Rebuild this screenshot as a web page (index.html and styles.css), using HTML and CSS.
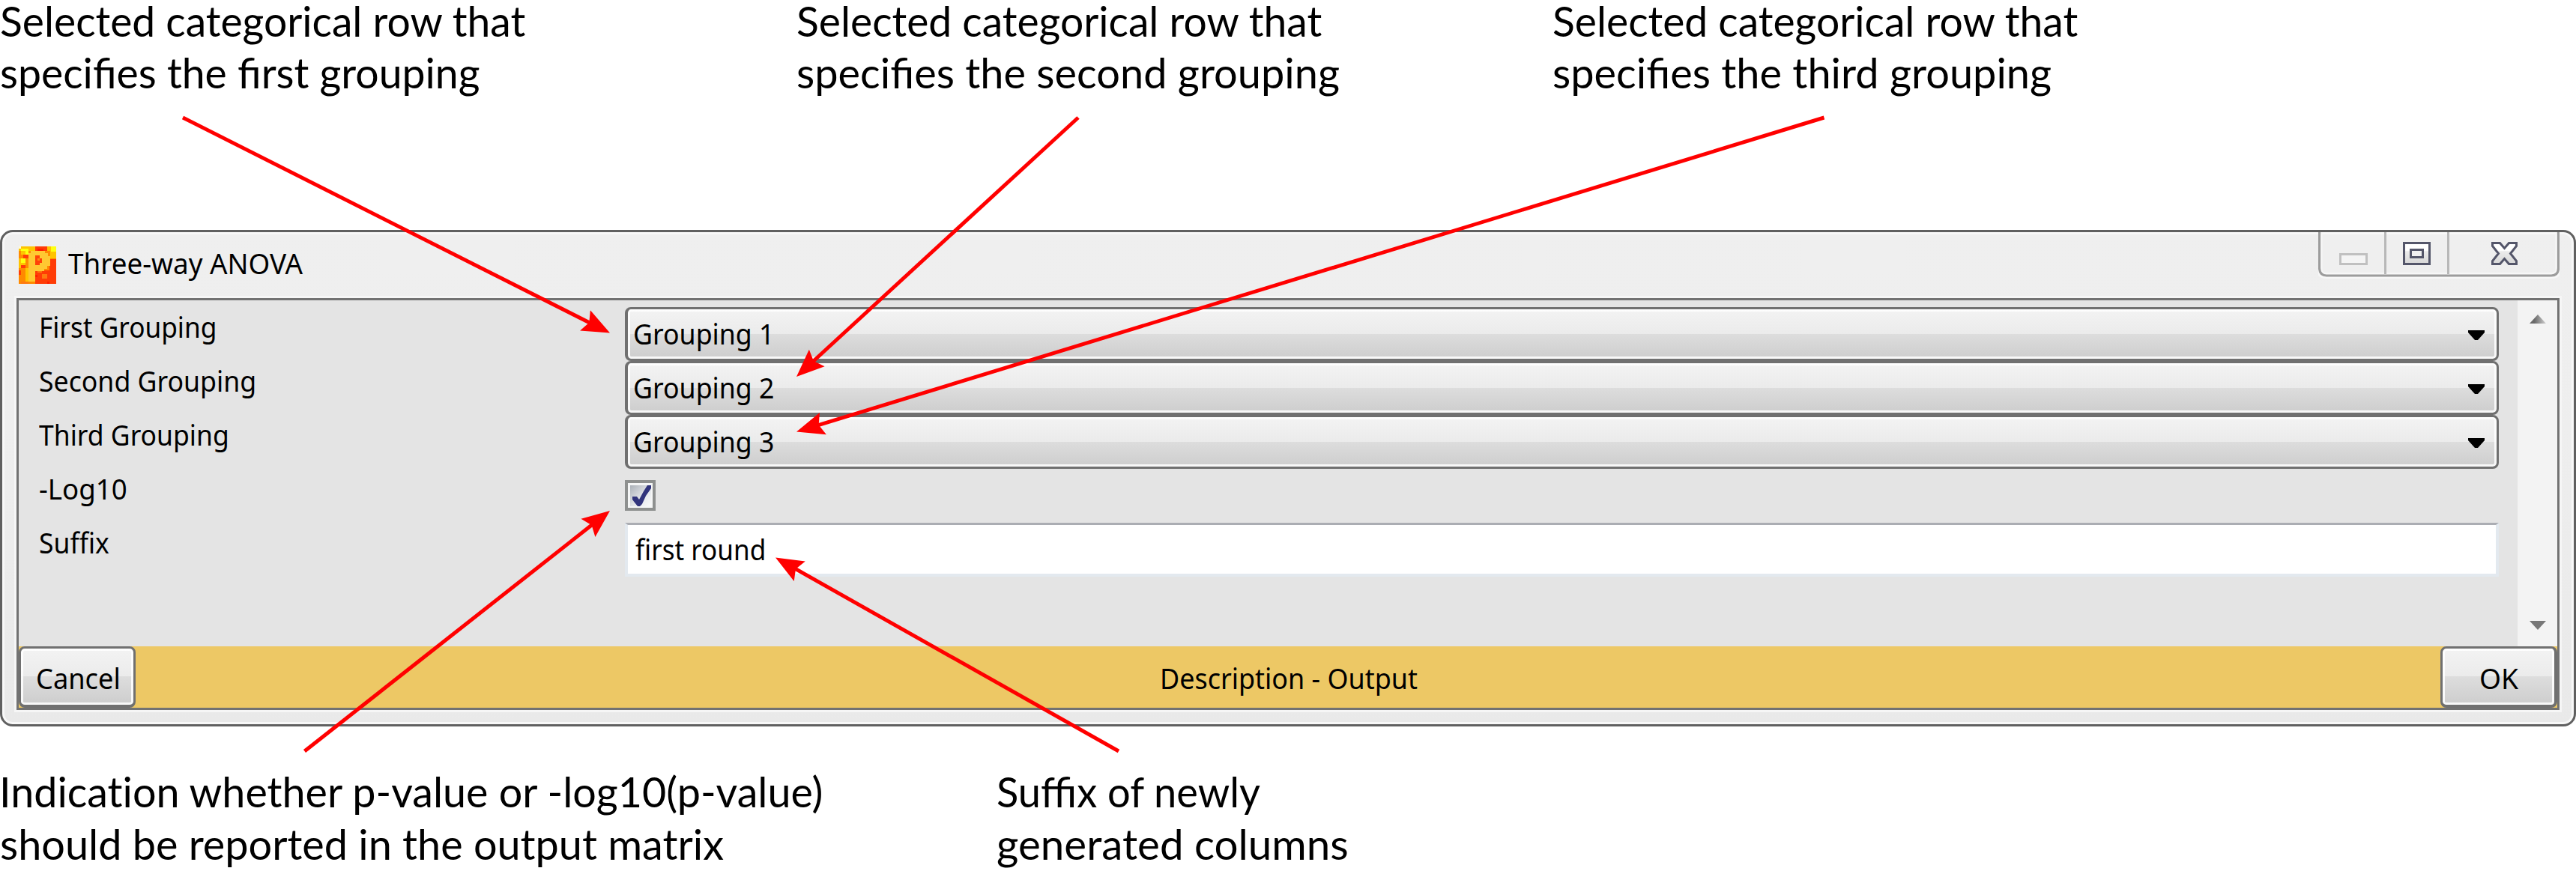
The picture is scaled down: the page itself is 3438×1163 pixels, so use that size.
FILE: index.html
```html
<!DOCTYPE html>
<html lang="en">
<head>
<meta charset="utf-8">
<title>Three-way ANOVA</title>
<link rel="stylesheet" href="styles.css">
</head>
<body>
<main class="figure">
  <header class="notes notes-top">
    <p class="note note-first"><span class="t n1">Selected categorical row that</span><span class="t n2">specifies the first grouping</span></p>
    <p class="note note-second"><span class="t n1">Selected categorical row that</span><span class="t n3">specifies the second grouping</span></p>
    <p class="note note-third"><span class="t n1">Selected categorical row that</span><span class="t n3">specifies the third grouping</span></p>
  </header>

  <section class="window">
    <div class="titlebar">
      <svg class="app-icon" viewBox="0 0 150 150" shape-rendering="crispEdges">
        <path fill="#ff8a00" d="M0 0h150v150H0z"/>
        <path fill="#ffc400" d="M0 0h66v18H40v15H9V18H0zM0 48h26v26H14v14H0zM115 0h35v48h-25V18h-10zM26 88h13v52H26z"/>
        <path fill="#ffff10" d="M9 9h17v9H9zM26 9h13v24H26zM128 0h22v22h-22zM9 48h17v17H9z"/>
        <path fill="#fffbd0" d="M0 0h9v9H0z"/>
        <path fill="#ff3c06" d="M66 0h49v18H66zM18 33h20v14H18zM122 50h28v100H66V97h56zM9 74h18v14H9zM0 97h9v18H0z"/>
        <path fill="#ff1e00" d="M75 9h25v9H75zM66 115h9v9h-9zM115 141h9v9h-9z"/>
        <path fill="#ff7a10" d="M92 110h22v20H92zM75 97h18v9H75zM9 141h30v9H9z"/>
        <path fill="#ffc832" d="M39 26h9v-9h57v9h12v13h8v40h-10v12h-12v8H66v42H39z"/>
        <path fill="#ff4208" d="M66 36h18v11h9v18h-9v9H66z"/>
        <path fill="#ff8a10" d="M75 47h9v9h-9z"/>
      </svg>
      <h1 class="title"><span class="t u-title">Three-way ANOVA</span></h1>
      <svg class="caption" viewBox="0 0 322 62">
        <path d="M1.500 0V50Q2 58 11 58H311Q320.500 58 320.500 50V0" fill="none" stroke="#f7f7f7" stroke-width="8"/>
        <path d="M89.500 0V56M173.500 0V56" stroke="#b8b8b8" stroke-width="3"/>
        <path d="M1.500 0V48Q2 58 11 58H311Q320.500 58 320.500 48V0" fill="none" stroke="#9c9c9c" stroke-width="3.200"/>
        <path d="M29.500 29.500h35v13h-35z" fill="#f4f4f4" stroke="#c0c0c0" stroke-width="3"/>
        <path d="M114.500 14.500h34v28h-34z" fill="url(#glyph)" stroke="#54566a" stroke-width="3"/>
        <path d="M123.500 23.500h16v10h-16z" fill="#f0f0f0" stroke="#54566a" stroke-width="3"/>
        <path d="M232.500 14.500h10l6 7 6-7h10v4l-8 10 8 10v4h-10l-6-7-6 7h-10v-4l8-10-8-10z" fill="url(#glyph)" stroke="#54566a" stroke-width="3"/>
        <defs><linearGradient id="glyph" x1="0" y1="0" x2="0" y2="1"><stop offset=".35" stop-color="#fff"/><stop offset=".4" stop-color="#ececec"/><stop offset="1" stop-color="#d6d6d6"/></linearGradient></defs>
      </svg>
    </div>

    <div class="client">
      <div class="form">
        <div class="labels">
          <div class="label"><span class="t u-first">First Grouping</span></div>
          <div class="label"><span class="t u-second">Second Grouping</span></div>
          <div class="label"><span class="t u-third">Third Grouping</span></div>
          <div class="label"><span class="t u-log">-Log10</span></div>
          <div class="label"><span class="t u-suffix">Suffix</span></div>
        </div>
        <div class="controls">
          <div class="combo"><span class="t u-combo">Grouping 1</span><svg class="drop" viewBox="0 0 22 13"><path d="M0 0h22v3L13 13H9L0 3z"/></svg></div>
          <div class="combo"><span class="t u-combo">Grouping 2</span><svg class="drop" viewBox="0 0 22 13"><path d="M0 0h22v3L13 13H9L0 3z"/></svg></div>
          <div class="combo"><span class="t u-combo">Grouping 3</span><svg class="drop" viewBox="0 0 22 13"><path d="M0 0h22v3L13 13H9L0 3z"/></svg></div>
          <div class="check-row">
            <svg class="check" viewBox="0 0 41 41">
              <defs><linearGradient id="box" x1="0" y1="0" x2="1" y2="1"><stop stop-color="#abb1b8"/><stop offset=".6" stop-color="#e6e8ec"/><stop offset="1" stop-color="#fafafa"/></linearGradient></defs>
              <path fill="#8e908f" d="M0 0h41v41H0z"/><path fill="#f5f6f6" d="M4 4h33v33H4z"/><path fill="url(#box)" d="M7 7h28v28H7z"/>
              <path fill="#31347c" d="M10 22h6l3 4 6-11 5-8h5v4l-7 10-5 11-3 3h-3l-4-5-3-4z"/>
            </svg>
          </div>
          <div class="field"><span class="t u-field">first round</span></div>
        </div>
        <div class="scrollbar">
          <svg class="tri" viewBox="0 0 22 12"><defs><linearGradient id="tri" x1="0" x2="1"><stop offset=".3" stop-color="#6a6a6a"/><stop offset="1" stop-color="#d0d0d0"/></linearGradient></defs><path fill="url(#tri)" d="M11 0l11 12H0z"/></svg>
          <svg class="tri" viewBox="0 0 22 12"><path fill="#777" d="M0 0h22L11 12z"/></svg>
        </div>
      </div>
      <div class="footer">
        <div class="button"><span class="t u-cancel">Cancel</span></div>
        <div class="status"><span class="t u-status">Description - Output</span></div>
        <div class="button ok"><span class="t u-ok">OK</span></div>
      </div>
    </div>
  </section>

  <footer class="notes notes-bottom">
    <p class="note note-log"><span class="t n4">Indicat&zwnj;ion whether p-value or -log10(p-value)</span><span class="t n5">should be reported in the output matrix</span></p>
    <p class="note note-suffix"><span class="t n6">Suffix of newly</span><span class="t n7">generated columns</span></p>
  </footer>

  <svg class="arrows" viewBox="0 0 3438 1163">
    <defs><marker id="head" markerUnits="userSpaceOnUse" markerWidth="40" markerHeight="32" refX="9" refY="16" orient="auto"><path fill="#f00" d="M37 16L0 .700L6 16L0 31.300z"/></marker></defs>
    <g stroke="#f00" stroke-width="5">
      <line x1="244" y1="157" x2="789" y2="432" marker-end="url(#head)"/>
      <line x1="1439" y1="157" x2="1083.600" y2="484" marker-end="url(#head)"/>
      <line x1="2434.500" y1="157" x2="1089.800" y2="568.300" marker-end="url(#head)"/>
      <line x1="406.500" y1="1003" x2="792" y2="699.300" marker-end="url(#head)"/>
      <line x1="1493" y1="1003" x2="1059.400" y2="758.300" marker-end="url(#head)"/>
    </g>
  </svg>
</main>
</body>
</html>
```

FILE: styles.css
```css
* { box-sizing: border-box; }
body { margin: 0; background: #fff; color: #000; overflow: hidden; }
p, h1 { margin: 0; font-weight: 400; }
svg { display: block; flex: none; }

.figure {
  position: relative;
  width: 3438px;
  height: 1163px;
  display: flex;
  flex-direction: column;
}

/* Text runs are narrowed horizontally to condensed widths */
.t { display: block; width: max-content; white-space: nowrap; transform-origin: 0 0; }

.notes { display: grid; font: 56px/70px Lato, "Noto Sans", sans-serif; }
.notes-top { height: 307px; flex: none; grid-template-columns: 1063px 1009px 1fr; }
.notes-top .n1 { line-height: 55px; margin-bottom: 7px; }
.notes-bottom { grid-template-columns: 1330px 1fr; padding-top: 52px; height: 193px; }
.note-log { margin-left: -1px; }
.n1 { transform: scaleX(.986); }
.n2 { transform: scaleX(.988); }
.n3 { transform: scaleX(.9985); }
.n4 { transform: scaleX(.9937); }
.n5 { transform: scaleX(.996); margin-left: 1px; }
.n6 { transform: scaleX(.968); }
.n7 { transform: scaleX(1.009); }

.window {
  height: 663px;
  flex: none;
  border: 3px solid #606060;
  border-radius: 17px;
  box-shadow: inset 0 0 0 3px #f8f8f8;
  background: linear-gradient(#efefef, #eee 40%, #e9e9e9);
  padding: 0 19px;
  font: 39px/54px "Noto Sans", "Open Sans", sans-serif;
}
.titlebar { height: 88px; display: flex; align-items: flex-start; }
.app-icon { width: 50px; height: 50px; margin: 19px 0 0 3px; }
.title { font-size: 39px; line-height: 54px; margin: 14px 0 0 16px; flex: 1; }
.caption { width: 322px; height: 62px; }
.client {
  height: 550px;
  border: 3px solid #727272;
  box-shadow: 0 0 0 3px #f6f6f6;
  background: #e4e4e4;
}
.form { height: 462px; display: grid; grid-template-columns: 809px 2501px 25px 53px; }
.labels { padding-left: 26.5px; line-height: 70px; }
.label { height: 72px; }
.controls { padding-top: 9px; }
.combo, .button {
  border: 3px solid #707070;
  border-left-width: 4px;
  border-radius: 8px;
  box-shadow: inset 0 0 0 3px rgba(255, 255, 255, .85);
  background: linear-gradient(#f3f3f3, #ebebeb 50%, #ddd 50%, #cdcdcd);
}
.combo { height: 72px; display: flex; justify-content: space-between; padding: 5px 16px 0 7px; }
.drop { width: 22px; height: 13px; margin-top: 23px; }
.check-row { height: 72px; padding-top: 15px; }
.check { width: 41px; height: 41px; }
.field {
  height: 72px;
  background: #fff;
  border: 4px solid #e3e9ef;
  border-top: 3px solid #abadb3;
  padding: 5px 0 0 10px;
}
.scrollbar {
  grid-column: 4;
  background: #f3f3f3;
  display: flex;
  flex-direction: column;
  align-items: center;
  justify-content: space-between;
  padding: 19px 0 22px;
}
.tri { width: 22px; height: 12px; }
.footer { height: 82px; display: flex; background: #edc865; line-height: 82px; }
.button { width: 156px; border-width: 3px 3px 4px; line-height: 77px; padding-left: 20px; }
.button.ok { padding-left: 49px; border-right-width: 4px; }
.status { flex: 1; padding: 1px 0 0 1367px; }

.u-title { transform: scaleX(.944); }
.u-first { transform: scaleX(.903); }
.u-second { transform: scaleX(.914); }
.u-third { transform: scaleX(.91); }
.u-log { transform: scaleX(.94); }
.u-suffix { transform: scaleX(.91); }
.u-combo { transform: scaleX(.915); }
.u-field { transform: scaleX(.9); }
.u-cancel { transform: scaleX(.929); }
.u-ok { transform: scaleX(.953); }
.u-status { transform: scaleX(.921); }

.arrows { position: absolute; left: 0; top: 0; width: 3438px; height: 1163px; pointer-events: none; }
```
